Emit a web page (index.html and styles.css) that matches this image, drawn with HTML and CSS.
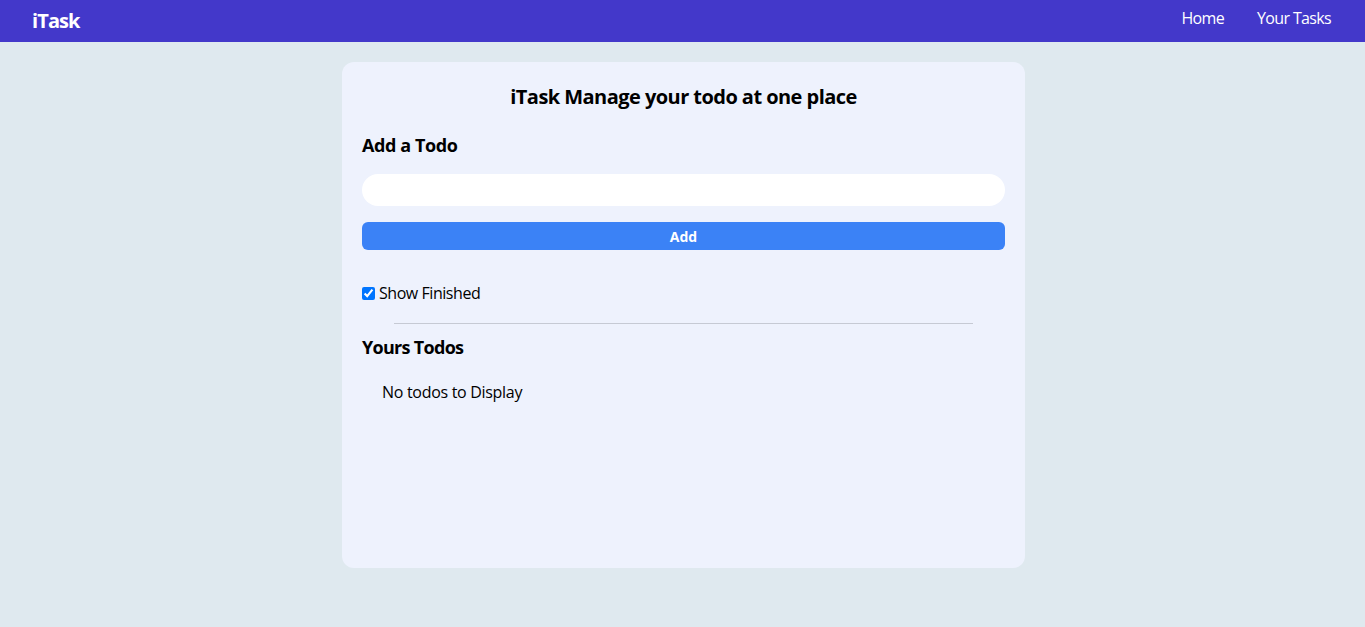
FILE: index.html
```html
<!DOCTYPE html>
<html lang="en">
<head>
<meta charset="utf-8">
<title>iTask</title>
<link rel="stylesheet" href="styles.css">
</head>
<body>
<nav class="nav">
  <div class="logo">iTask</div>
  <ul class="links">
    <li>Home</li>
    <li>Your Tasks</li>
  </ul>
</nav>
<main class="card">
  <h1 class="title">iTask Manage your todo at one place</h1>
  <section class="add">
    <h2 class="heading">Add a Todo</h2>
    <input class="field" type="text">
    <button class="btn">Add</button>
  </section>
  <label class="show"><input type="checkbox" checked class="check"> Show Finished</label>
  <div class="rule"></div>
  <h2 class="heading tight">Yours Todos</h2>
  <div class="todos">
    <div class="empty">No todos to Display</div>
  </div>
</main>
</body>
</html>
```
FILE: styles.css
```css
* { box-sizing: border-box; }
body {
  margin: 0;
  background: #dfe9ef;
  font-family: "Open Sans", "Noto Sans", sans-serif;
  color: #000;
}
.nav {
  display: flex;
  justify-content: space-between;
  align-items: center;
  background: #4338ca;
  color: #fff;
  height: 42px;
}
.logo {
  margin-left: 32px;
  font-size: 20px;
  font-weight: 700;
  letter-spacing: -0.9px;
  padding-bottom: 2px;
}
.links {
  display: flex;
  gap: 33px;
  margin: 0 34px 0 0;
  padding: 0;
  list-style: none;
  font-size: 16px;
  padding-bottom: 7px;
  letter-spacing: -0.65px;
}
.card {
  width: 683px;
  min-height: 506px;
  margin: 20px 0 0 342px;
  background: #eef2fd;
  border-radius: 12px;
  padding: 20px;
}
.title {
  margin: 1px 0 0;
  text-align: center;
  font-size: 20px;
  line-height: 28px;
  font-weight: 700;
  letter-spacing: -0.55px;
}
.add {
  display: flex;
  flex-direction: column;
  margin: 20px 0 0;
}
.heading {
  margin: 0;
  font-size: 18px;
  line-height: 28px;
  font-weight: 700;
  letter-spacing: -0.4px;
}
.heading.tight {
  letter-spacing: -0.7px;
  margin-top: -1px;
}
.field {
  margin-top: 15px;
  height: 32px;
  border: none;
  border-radius: 999px;
  background: #fff;
  padding: 0 12px;
  outline: none;
}
.btn {
  margin-top: 16px;
  height: 28px;
  border: none;
  border-radius: 6px;
  background: #3b82f6;
  color: #fff;
  font-family: inherit;
  font-size: 14px;
  font-weight: 700;
}
.show {
  display: flex;
  align-items: center;
  gap: 4px;
  margin-top: 31px;
  font-size: 16px;
  line-height: 24px;
  letter-spacing: -0.45px;
}
.check {
  margin: 0;
  width: 13px;
  height: 13px;
}
.rule {
  width: 90%;
  height: 1px;
  background: #c6cad4;
  margin: 18px auto 10px;
}
.todos {
  padding: 20px;
}
.empty {
  font-size: 16px;
  line-height: 24px;
  margin-top: -1px;
  letter-spacing: -0.3px;
}
```
